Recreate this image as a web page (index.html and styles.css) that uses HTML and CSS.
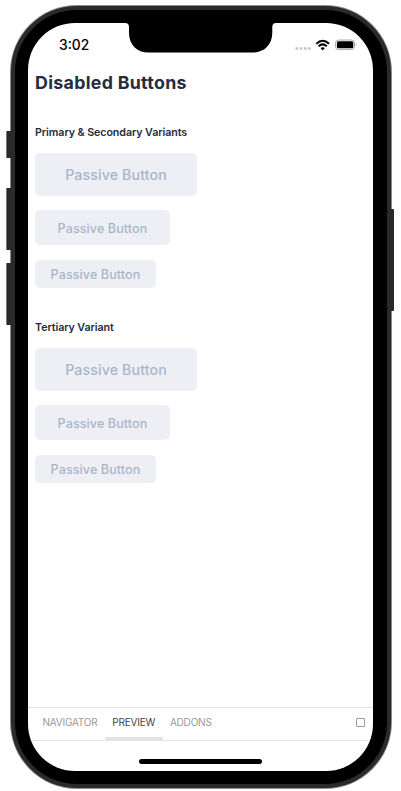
FILE: index.html
```html
<!DOCTYPE html>
<html lang="en">
<head>
<meta charset="utf-8">
<title>Disabled Buttons</title>
<link rel="stylesheet" href="styles.css">
</head>
<body>
<div class="device">
  <span class="key key-mute"></span>
  <span class="key key-up"></span>
  <span class="key key-down"></span>
  <span class="key key-power"></span>
  <div class="bezel">
    <div class="screen">
      <svg class="notch" width="152" height="30" viewBox="0 0 152 30"><path d="M0 0H152Q148.300 0 148.300 4V9.500C148.300 22 140 29.500 129 29.500H24.500C13 29.500 5 22 5 9.500V4Q5 0 1 0Z"/></svg>
      <header class="status">
        <span class="time">3:02</span>
        <svg class="indicators" width="64" height="14" viewBox="0 0 64 14">
          <g fill="#c4c4c4"><rect x="0.500" y="8.300" width="2.700" height="2.500" rx=".5"/><rect x="4.700" y="8.300" width="2.700" height="2.500" rx=".5"/><rect x="8.900" y="8.300" width="2.700" height="2.500" rx=".5"/><rect x="13" y="8.300" width="2.700" height="2.500" rx=".5"/></g>
          <g fill="none" stroke="#000" stroke-width="2"><path d="M21.300 4.700Q27.700-1.300 34.100 4.700"/><path d="M23.600 7.200Q27.700 3.500 31.800 7.200"/></g>
          <path d="M25.500 9.100Q27.700 7.300 29.900 9.100L27.700 11.400Z"/>
          <rect x="40.500" y="1" width="19" height="9.600" rx="3" fill="#fff" stroke="#aaa"/>
          <rect x="41.900" y="2.300" width="16.400" height="7" rx="1.500"/>
          <path d="M60.800 4.200Q62.500 5.700 60.800 7.200Z" fill="#999"/>
        </svg>
      </header>
      <main class="content">
        <h1>Disabled Buttons</h1>
        <section class="group">
          <h2>Primary &amp; Secondary Variants</h2>
          <button class="btn large" disabled>Passive Button</button>
          <button class="btn medium" disabled>Passive Button</button>
          <button class="btn small" disabled>Passive Button</button>
        </section>
        <section class="group">
          <h2>Tertiary Variant</h2>
          <button class="btn large" disabled>Passive Button</button>
          <button class="btn medium" disabled>Passive Button</button>
          <button class="btn small" disabled>Passive Button</button>
        </section>
      </main>
      <nav class="tabs">
        <span class="tab">NAVIGATOR</span>
        <span class="tab active">PREVIEW</span>
        <span class="tab">ADDONS</span>
        <span class="toggle"></span>
      </nav>
      <footer class="home"><span class="home-bar"></span></footer>
    </div>
  </div>
</div>
</body>
</html>
```
FILE: styles.css
```css
* { box-sizing: border-box; }
body { margin: 0; background: #fff; overflow: hidden; }
.device {
  position: relative;
  width: 382px;
  height: 784px;
  margin: 5px 0 0 10px;
  padding: 1px;
  border-radius: 67px;
  background: #8c8c8c;
}
.bezel {
  height: 782px;
  padding: 13px 14px;
  border: 4px solid #292a2a;
  border-radius: 66px;
  background: #000;
}
.screen {
  position: relative;
  width: 345px;
  height: 748px;
  margin-left: -1px;
  display: flex;
  flex-direction: column;
  overflow: hidden;
  border-radius: 47px;
  background: #fff;
}
.key { position: absolute; width: 5px; background: #292a2a; border-left: 1px solid #777; border-radius: 1px 0 0 1px; left: -4px; }
.key-mute { top: 126px; height: 27px; }
.key-up { top: 183px; height: 62px; }
.key-down { top: 258px; height: 62px; }
.key-power { top: 204px; height: 102px; left: auto; right: -2px; width: 4px; border-left: 0; border-radius: 0 1px 1px 0; }
.notch { position: absolute; top: 0; left: 96px; }
.status {
  display: flex;
  justify-content: space-between;
  height: 44px;
  padding: 13px 14px 0 31px;
}
.time { font: 500 13.800px/18px Inter, sans-serif; color: #000; }
.indicators { margin-top: 3px; }
.content { flex: 1; padding-left: 7px; font-family: Inter, sans-serif; color: #242c3e; }
h1 { margin: 5px 0 31px; font-size: 17.800px; line-height: 22px; font-weight: 700; letter-spacing: .3px; }
.group { display: flex; flex-direction: column; align-items: flex-start; height: 195px; }
h2 { margin: 0 0 13px; font-size: 10.700px; line-height: 15px; font-weight: 600; letter-spacing: -.08px; }
.btn {
  margin: 0;
  padding: 2px 0 0;
  border: 0;
  border-radius: 5px;
  background: #edeff5;
  color: #a9b6c8;
  font-family: Inter, sans-serif;
  font-weight: 550;
  font-size: 12.500px;
  letter-spacing: .12px;
  white-space: nowrap;
}
.large { width: 162px; height: 42.500px; margin-bottom: 14.500px; padding-top: 1px; font-size: 14.200px; }
.medium { width: 135px; height: 35.300px; margin-bottom: 14.500px; }
.small { width: 121px; height: 28.300px; }
.tabs {
  display: flex;
  height: 34px;
  padding: 0 8px 0 7px;
  border-top: 1px solid #e3e3e3;
  border-bottom: 1px solid #e3e3e3;
  font: 400 10px/29px Inter, sans-serif;
  letter-spacing: -.2px;
  color: #999;
}
.tab { padding: 0 7.400px; border-bottom: 3px solid transparent; }
.active { color: #444; border-color: #e3e3e3; }
.toggle { width: 9px; height: 9px; margin: 10px 0 0 auto; border: 1px solid #999; border-radius: 1px; }
.home { height: 30px; padding-top: 18px; }
.home-bar { display: block; width: 123px; height: 4.500px; margin-left: 111px; border-radius: 2.500px; background: #000; }
```
